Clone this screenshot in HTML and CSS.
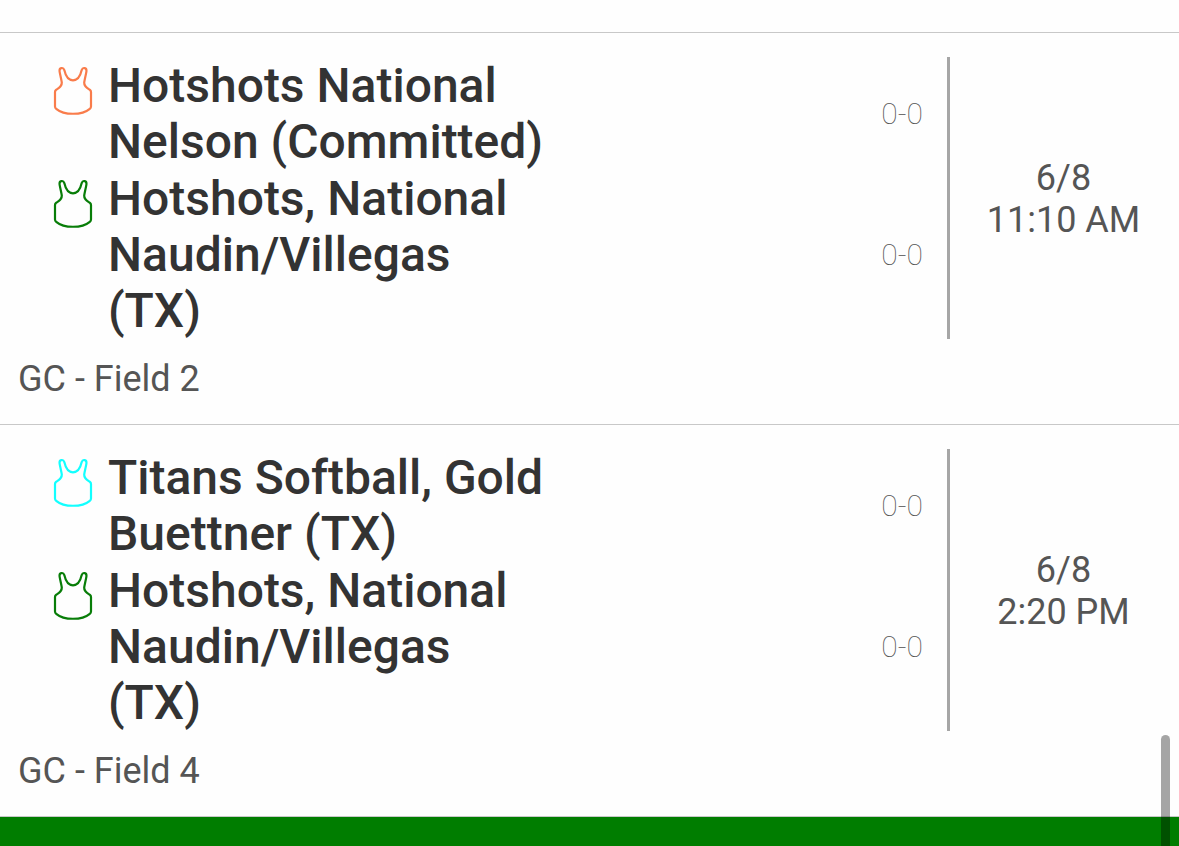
FILE: index.html
```html
<!DOCTYPE html>
<html lang="en">
<head>
<meta charset="utf-8">
<meta name="viewport" content="width=device-width, initial-scale=1">
<title>Schedule</title>
<link rel="stylesheet" href="styles.css">
</head>
<body>
<svg class="defs" aria-hidden="true">
  <symbol id="jersey" viewBox="0 0 40 50">
    <path d="M6.6 5.6C5.9 1.4 10.3 .9 11.3 4.1C12.4 9 14.4 14.3 20 14.3C25.6 14.3 27.6 9 28.7 4.1C29.7 .9 34.1 1.4 33.4 5.6C32.6 10 31.6 14 31.2 16.5C31 20.5 34 22 37 24Q38 24.7 38 26V40.5Q38 42 36.8 42.8C29 49.4 11 49.4 3.2 42.8Q2 42 2 40.5V26Q2 24.7 3 24C6 22 9 20.5 8.8 16.5C8.4 14 7.4 10 6.6 5.6Z"/>
  </symbol>
</svg>
<main class="schedule">
  <div class="previous"></div>
  <article class="game">
    <div class="matchup">
      <ul class="teams">
        <li class="team"><svg class="jersey coral" aria-hidden="true"><use href="#jersey"/></svg><span class="name">Hotshots National Nelson (Committed)</span></li>
        <li class="team"><svg class="jersey green" aria-hidden="true"><use href="#jersey"/></svg><span class="name">Hotshots, National Naudin/Villegas (TX)</span></li>
      </ul>
      <div class="scores"><span class="score">0-0</span><span class="score">0-0</span></div>
      <time class="when"><span>6/8</span><span>11:10 AM</span></time>
    </div>
    <p class="field">GC - Field 2</p>
  </article>
  <article class="game">
    <div class="matchup">
      <ul class="teams">
        <li class="team"><svg class="jersey cyan" aria-hidden="true"><use href="#jersey"/></svg><span class="name">Titans Softball, Gold Buettner (TX)</span></li>
        <li class="team"><svg class="jersey green" aria-hidden="true"><use href="#jersey"/></svg><span class="name">Hotshots, National Naudin/Villegas (TX)</span></li>
      </ul>
      <div class="scores"><span class="score">0-0</span><span class="score">0-0</span></div>
      <time class="when"><span>6/8</span><span>2:20 PM</span></time>
    </div>
    <p class="field">GC - Field 4</p>
  </article>
  <div class="next-heading"></div>
</main>
<div class="scrollbar"></div>
</body>
</html>
```
FILE: styles.css
```css
* { box-sizing: border-box; }
body {
  margin: 0;
  background: #fefefe;
  color: #555;
  font-family: Roboto, "Liberation Sans", sans-serif;
  font-size: 36px;
  line-height: 42px;
}
.defs { display: none; }
.schedule {
  display: flex;
  flex-direction: column;
  min-height: 100vh;
}
.previous {
  height: 33px;
  border-bottom: 1px solid #c8c8c8;
}
.game {
  padding: 24px 0;
  border-bottom: 1px solid #c8c8c8;
}
.matchup { display: flex; }
.teams {
  display: flex;
  flex: 1;
  flex-direction: column;
  gap: 1px;
  margin: 0;
  padding: 1px 0 0 53px;
  list-style: none;
}
.team {
  display: flex;
  gap: 15px;
  align-items: flex-start;
}
.jersey {
  flex: none;
  width: 40px;
  height: 50px;
  margin-top: 8px;
  fill: none;
  stroke: currentColor;
  stroke-width: 2.2;
  stroke-linejoin: round;
}
.coral { color: #f97c4b; }
.green { color: #087d08; }
.cyan { color: #12ffff; }
.name {
  max-width: 440px;
  color: #333;
  font-size: 48px;
  font-weight: 500;
  line-height: 56px;
}
.scores {
  display: flex;
  flex-direction: column;
  padding-right: 24px;
  font-size: 30px;
  font-weight: 100;
}
.score {
  display: flex;
  flex: 1;
  align-items: center;
  padding-bottom: 28px;
}
.when {
  display: flex;
  flex-direction: column;
  justify-content: center;
  width: 232px;
  padding: 2px 2px 0 0;
  border-left: 3px solid #a6a6a6;
  text-align: center;
}
.field {
  margin: 19px 0 0;
  padding: 0 18px;
}
.next-heading {
  flex: 1;
  min-height: 29px;
  background: #007d00;
}
.scrollbar {
  position: absolute;
  top: 735px;
  right: 9px;
  bottom: 0;
  width: 9px;
  border-radius: 5px 5px 0 0;
  background: rgba(0, 0, 0, 0.35);
}
```
